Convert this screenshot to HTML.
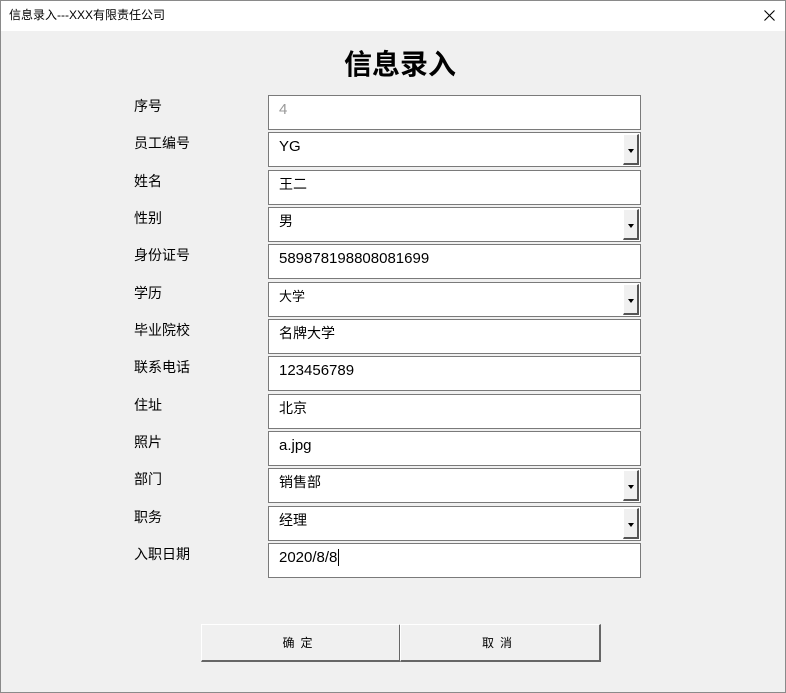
<!DOCTYPE html>
<html><head><meta charset="utf-8"><style>
*{margin:0;padding:0;box-sizing:border-box}
body{width:786px;height:693px;background:#f0f0f0;position:relative;overflow:hidden;font-family:"Liberation Sans","Noto Sans CJK SC",sans-serif}
.frame{position:absolute;left:0;top:0;width:786px;height:693px;border:1px solid #8a8a8a;pointer-events:none}
.title{position:absolute;left:0;top:0;width:786px;height:31px;background:#fff;font-size:12px;line-height:31px;padding-left:9px;color:#000}
.x{position:absolute;left:764px;top:10px}
h1{position:absolute;left:0;width:800px;top:45px;text-align:center;font-size:28px;font-weight:bold;line-height:40px}
.lb{position:absolute;left:134px;font-size:14px;color:#000}
.f{position:absolute;left:268px;width:373px;height:35px;background:#fff;border:1px solid #7a7a7a;font-size:15px;padding-left:10px;line-height:27px}
.dd{position:absolute;right:1px;top:1px;width:16px;height:31px;background:#f0f0f0;border-right:2px solid #555;border-bottom:2px solid #555;border-top:1px solid #fff;border-left:1px solid #fff}
.dd:after{content:"";position:absolute;left:4px;top:14px;border-left:3.5px solid transparent;border-right:3.5px solid transparent;border-top:4px solid #000}
.btn{position:absolute;top:624px;height:38px;background:#f0f0f0;border-top:1px solid #fff;border-left:1px solid #fff;border-right:2px solid #666;border-bottom:2px solid #666;font-size:12px;text-align:center;line-height:36px;letter-spacing:6px}
</style></head><body>
<div class="title">信息录入---XXX有限责任公司<svg class="x" width="11" height="11" viewBox="0 0 11 11"><path d="M0.5 0.5L10.5 10.5M10.5 0.5L0.5 10.5" stroke="#000" stroke-width="1.1"/></svg></div>
<h1>信息录入</h1>

<div class="lb" style="top:96px">序号</div><div class="f" style="top:95px;color:#999">4</div>
<div class="lb" style="top:133px">员工编号</div><div class="f" style="top:132px">YG<div class="dd"></div></div>
<div class="lb" style="top:171px">姓名</div><div class="f" style="top:170px;font-size:14px">王二</div>
<div class="lb" style="top:208px">性别</div><div class="f" style="top:207px;font-size:14px">男<div class="dd"></div></div>
<div class="lb" style="top:245px">身份证号</div><div class="f" style="top:244px">589878198808081699</div>
<div class="lb" style="top:283px">学历</div><div class="f" style="top:282px;font-size:13px">大学<div class="dd"></div></div>
<div class="lb" style="top:320px">毕业院校</div><div class="f" style="top:319px;font-size:14px">名牌大学</div>
<div class="lb" style="top:357px">联系电话</div><div class="f" style="top:356px">123456789</div>
<div class="lb" style="top:395px">住址</div><div class="f" style="top:394px;font-size:14px">北京</div>
<div class="lb" style="top:432px">照片</div><div class="f" style="top:431px">a.jpg</div>
<div class="lb" style="top:469px">部门</div><div class="f" style="top:468px;font-size:14px">销售部<div class="dd"></div></div>
<div class="lb" style="top:507px">职务</div><div class="f" style="top:506px;font-size:14px">经理<div class="dd"></div></div>
<div class="lb" style="top:544px">入职日期</div><div class="f" style="top:543px">2020/8/8<span style="border-left:1px solid #000;margin-left:1px"></span></div>

<div class="btn" style="left:201px;width:200px">确定</div>
<div class="btn" style="left:400px;width:201px">取消</div>
<div class="frame"></div>
</body></html>
